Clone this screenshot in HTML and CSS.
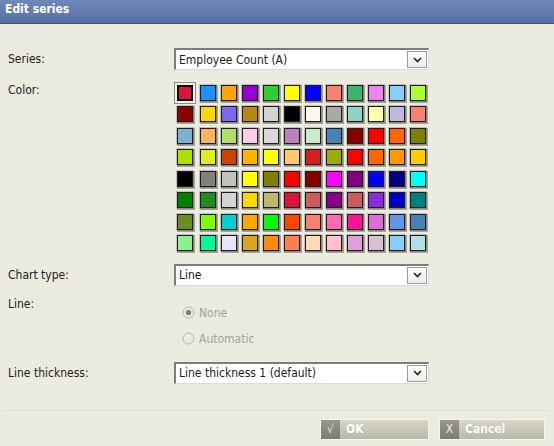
FILE: index.html
```html
<!DOCTYPE html>
<html>
<head>
<meta charset="utf-8">
<link rel="stylesheet" href="styles.css">
</head>
<body>
<div class="dialog">
  <div class="titlebar">Edit series</div>
  <div class="form">
    <div class="row row-series">
      <div class="label">Series:</div>
      <div class="select">
        <span class="select-text">Employee Count (A)</span>
        <span class="select-btn"><svg width="9" height="6" viewBox="0 0 9 6"><path d="M1 1 L4.5 4.5 L8 1" fill="none" stroke="#222" stroke-width="1.6"/></svg></span>
      </div>
    </div>
    <div class="row row-color">
      <div class="label label-top">Color:</div>
      <div class="swatches">
        <span class="sw sel" style="background:#DC143C"></span>
        <span class="sw" style="background:#1E90FF"></span>
        <span class="sw" style="background:#FFA500"></span>
        <span class="sw" style="background:#9400D3"></span>
        <span class="sw" style="background:#32CD32"></span>
        <span class="sw" style="background:#FFFF00"></span>
        <span class="sw" style="background:#0000FF"></span>
        <span class="sw" style="background:#FA8072"></span>
        <span class="sw" style="background:#3CB371"></span>
        <span class="sw" style="background:#EE82EE"></span>
        <span class="sw" style="background:#87CEFA"></span>
        <span class="sw" style="background:#ADFF2F"></span>

        <span class="sw" style="background:#8B0000"></span>
        <span class="sw" style="background:#FFD700"></span>
        <span class="sw" style="background:#7B68EE"></span>
        <span class="sw" style="background:#B8860B"></span>
        <span class="sw" style="background:#D3D3D3"></span>
        <span class="sw" style="background:#000000"></span>
        <span class="sw" style="background:#FFF8EC"></span>
        <span class="sw" style="background:#A9A9A9"></span>
        <span class="sw" style="background:#8DD3C7"></span>
        <span class="sw" style="background:#FFFFB3"></span>
        <span class="sw" style="background:#BEBADA"></span>
        <span class="sw" style="background:#FB8072"></span>

        <span class="sw" style="background:#80B1D3"></span>
        <span class="sw" style="background:#FDB462"></span>
        <span class="sw" style="background:#B3DE69"></span>
        <span class="sw" style="background:#FCCDE5"></span>
        <span class="sw" style="background:#D9D9D9"></span>
        <span class="sw" style="background:#BC80BD"></span>
        <span class="sw" style="background:#CCEBC5"></span>
        <span class="sw" style="background:#4682B4"></span>
        <span class="sw" style="background:#8B0000"></span>
        <span class="sw" style="background:#FF0000"></span>
        <span class="sw" style="background:#FF6600"></span>
        <span class="sw" style="background:#7F7F00"></span>

        <span class="sw" style="background:#B0E000"></span>
        <span class="sw" style="background:#DDEE22"></span>
        <span class="sw" style="background:#CC4400"></span>
        <span class="sw" style="background:#FFB300"></span>
        <span class="sw" style="background:#FFFF00"></span>
        <span class="sw" style="background:#FFC870"></span>
        <span class="sw" style="background:#D21F1F"></span>
        <span class="sw" style="background:#9AAE00"></span>
        <span class="sw" style="background:#FF0000"></span>
        <span class="sw" style="background:#FF6600"></span>
        <span class="sw" style="background:#FF9900"></span>
        <span class="sw" style="background:#FFCC00"></span>

        <span class="sw" style="background:#000000"></span>
        <span class="sw" style="background:#808080"></span>
        <span class="sw" style="background:#C0C0C0"></span>
        <span class="sw" style="background:#FFFF00"></span>
        <span class="sw" style="background:#808000"></span>
        <span class="sw" style="background:#FF0000"></span>
        <span class="sw" style="background:#800000"></span>
        <span class="sw" style="background:#FF00FF"></span>
        <span class="sw" style="background:#800080"></span>
        <span class="sw" style="background:#0000FF"></span>
        <span class="sw" style="background:#000080"></span>
        <span class="sw" style="background:#00FFFF"></span>

        <span class="sw" style="background:#008000"></span>
        <span class="sw" style="background:#228B22"></span>
        <span class="sw" style="background:#D3D3D3"></span>
        <span class="sw" style="background:#FFD700"></span>
        <span class="sw" style="background:#BDB76B"></span>
        <span class="sw" style="background:#DC143C"></span>
        <span class="sw" style="background:#CD5C5C"></span>
        <span class="sw" style="background:#8B008B"></span>
        <span class="sw" style="background:#CD5C5C"></span>
        <span class="sw" style="background:#8A2BE2"></span>
        <span class="sw" style="background:#0000CD"></span>
        <span class="sw" style="background:#008080"></span>

        <span class="sw" style="background:#6B8E23"></span>
        <span class="sw" style="background:#7FFF00"></span>
        <span class="sw" style="background:#00CED1"></span>
        <span class="sw" style="background:#FFA500"></span>
        <span class="sw" style="background:#00FF00"></span>
        <span class="sw" style="background:#FF4500"></span>
        <span class="sw" style="background:#FA8072"></span>
        <span class="sw" style="background:#FF69B4"></span>
        <span class="sw" style="background:#FF1493"></span>
        <span class="sw" style="background:#DA70D6"></span>
        <span class="sw" style="background:#6495ED"></span>
        <span class="sw" style="background:#4682B4"></span>

        <span class="sw" style="background:#90EE90"></span>
        <span class="sw" style="background:#00FA9A"></span>
        <span class="sw" style="background:#E6E6FA"></span>
        <span class="sw" style="background:#DAA520"></span>
        <span class="sw" style="background:#FF8C00"></span>
        <span class="sw" style="background:#FF7F50"></span>
        <span class="sw" style="background:#FFDAB9"></span>
        <span class="sw" style="background:#FFC0CB"></span>
        <span class="sw" style="background:#DDA0DD"></span>
        <span class="sw" style="background:#D8BFD8"></span>
        <span class="sw" style="background:#87CEFA"></span>
        <span class="sw" style="background:#B0E0E6"></span>
      </div>
    </div>
    <div class="row row-chart">
      <div class="label">Chart type:</div>
      <div class="select">
        <span class="select-text">Line</span>
        <span class="select-btn"><svg width="9" height="6" viewBox="0 0 9 6"><path d="M1 1 L4.5 4.5 L8 1" fill="none" stroke="#222" stroke-width="1.6"/></svg></span>
      </div>
    </div>
    <div class="row row-line">
      <div class="label label-line">Line:</div>
      <div class="radios">
        <div class="radio radio-none">
          <svg width="13" height="13" viewBox="0 0 13 13"><circle cx="6.5" cy="6.5" r="5.5" fill="#e9e9e6" stroke="#b4b4b0"/><circle cx="6.5" cy="6.5" r="2.6" fill="#7a7a7a"/></svg>
          <span>None</span>
        </div>
        <div class="radio radio-auto">
          <svg width="13" height="13" viewBox="0 0 13 13"><circle cx="6.5" cy="6.5" r="5.5" fill="#e9e9e6" stroke="#b4b4b0"/></svg>
          <span>Automatic</span>
        </div>
      </div>
    </div>
    <div class="row row-thick">
      <div class="label">Line thickness:</div>
      <div class="select">
        <span class="select-text">Line thickness 1 (default)</span>
        <span class="select-btn"><svg width="9" height="6" viewBox="0 0 9 6"><path d="M1 1 L4.5 4.5 L8 1" fill="none" stroke="#222" stroke-width="1.6"/></svg></span>
      </div>
    </div>
  </div>
  <div class="separator"></div>
  <div class="buttons">
    <div class="btn btn-ok"><span class="btn-icon">√</span><span class="btn-label">OK</span></div>
    <div class="btn btn-cancel"><span class="btn-icon">X</span><span class="btn-label">Cancel</span></div>
  </div>
</div>
</body>
</html>
```

FILE: styles.css
```css
html, body {
  margin: 0;
  padding: 0;
}
body {
  background: #ecebe0;
  font-family: "DejaVu Sans Condensed", "Liberation Sans", sans-serif;
  font-size: 12px;
  color: #222;
  width: 554px;
  height: 446px;
  overflow: hidden;
}
.titlebar {
  height: 23px;
  border-bottom: 1px solid #3e4e72;
  background: linear-gradient(#6f88ba, #5670a4);
  color: #fff;
  font-weight: bold;
  font-size: 12px;
  line-height: 19px;
  padding-left: 5px;
  box-sizing: content-box;
}
.form {
  display: flex;
  flex-direction: column;
  padding-left: 8px;
}
.row {
  display: flex;
  align-items: center;
}
.label {
  width: 166px;
  flex: none;
  line-height: 12px;
}
.row-series { margin-top: 24px; }
.row-color { margin-top: 14.5px; align-items: flex-start; }
.label-top { margin-top: -1px; }
.row-chart { margin-top: 12.5px; }
.row-line { margin-top: 12px; align-items: flex-start; }
.row-thick { margin-top: 16px; }

.select {
  width: 255px;
  height: 22px;
  box-sizing: border-box;
  background: #fff;
  border-style: solid;
  border-width: 2px 1px 1px 2px;
  border-color: #7d7d7d #dcdcd4 #dcdcd4 #7d7d7d;
  display: flex;
  align-items: center;
}
.select-text {
  flex: 1;
  padding-left: 3px;
  color: #222;
  white-space: nowrap;
}
.select-btn {
  width: 20px;
  height: 17px;
  box-sizing: border-box;
  margin-right: 1px;
  border: 1px solid #9b9b9b;
  background: linear-gradient(#ffffff, #ececec);
  display: flex;
  align-items: center;
  justify-content: center;
}

.swatches {
  display: grid;
  grid-template-columns: 18px repeat(11, 16px);
  grid-auto-rows: 16px;
  column-gap: 5px;
  row-gap: 5.5px;
  margin-left: 3px;
}
.sw {
  width: 16px;
  height: 16px;
  box-sizing: border-box;
  border: 1px solid #1e1e1e;
  box-shadow: 0 0 0 1px rgba(0,0,0,0.18), 1px 1px 0 1px rgba(0,0,0,0.3);
}
.sw.sel {
  border: 2px solid #000;
  box-shadow: 0 0 0 2px #f3f3ee, 0 0 0 3px #8a8a86;
}

.label-line { margin-top: 0; }
.radios {
  display: flex;
  flex-direction: column;
  padding-top: 8px;
  margin-left: 8px;
}
.radio {
  display: flex;
  align-items: center;
  height: 14px;
  color: #a2a2a0;
}
.radio svg { margin-right: 4px; }
.radio-auto { margin-top: 12px; }

.separator {
  margin: 26px 5px 0 5px;
  border-top: 1px dotted #cdcdc4;
}
.buttons {
  display: flex;
  justify-content: flex-end;
  gap: 10px;
  margin-top: 8px;
  padding-right: 9px;
}
.btn {
  height: 21px;
  box-sizing: border-box;
  border: 1px solid #f6f5ee;
  background: linear-gradient(#d9d7c9, #b9b7a7);
  display: flex;
  align-items: stretch;
  color: #fff;
  font-weight: bold;
  font-size: 12px;
  font-family: "DejaVu Sans Condensed", "Liberation Sans", sans-serif;
}
.btn-ok { width: 109px; }
.btn-cancel { width: 106px; }
.btn-icon {
  width: 19px;
  background: linear-gradient(#97968a, #7d7c70);
  color: #ecebe3;
  font-weight: normal;
  display: flex;
  align-items: center;
  justify-content: center;
}
.btn-label {
  padding-left: 6px;
  display: flex;
  align-items: center;
  text-shadow: 0 0 1px rgba(0,0,0,0.15);
}
```
